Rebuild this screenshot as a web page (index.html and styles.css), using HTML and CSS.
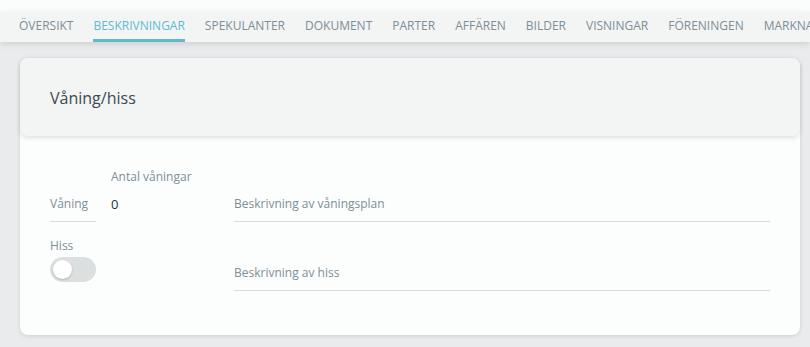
FILE: index.html
```html
<!DOCTYPE html>
<html lang="sv">
<head>
<meta charset="utf-8">
<title>Beskrivningar</title>
<link rel="stylesheet" href="styles.css">
</head>
<body>
<div class="topstrip"></div>
<nav class="tabs">
  <a class="tab">ÖVERSIKT</a>
  <a class="tab active">BESKRIVNINGAR</a>
  <a class="tab">SPEKULANTER</a>
  <a class="tab">DOKUMENT</a>
  <a class="tab">PARTER</a>
  <a class="tab">AFFÄREN</a>
  <a class="tab">BILDER</a>
  <a class="tab">VISNINGAR</a>
  <a class="tab">FÖRENINGEN</a>
  <a class="tab">MARKNADSFÖRING</a>
</nav>
<main class="page">
  <section class="card">
    <header class="card-head">Våning/hiss</header>
    <div class="card-body">
      <div class="row">
        <div class="field f-small">
          <div class="label"></div>
          <div class="input placeholder underline">Våning</div>
        </div>
        <div class="field f-mid">
          <div class="label">Antal våningar</div>
          <div class="input value">0</div>
        </div>
        <div class="field f-wide">
          <div class="label"></div>
          <div class="input placeholder underline">Beskrivning av våningsplan</div>
        </div>
      </div>
      <div class="row">
        <div class="field f-small">
          <div class="label">Hiss</div>
          <div class="toggle"><span class="knob"></span></div>
        </div>
        <div class="field f-mid"></div>
        <div class="field f-wide">
          <div class="label"></div>
          <div class="input placeholder underline">Beskrivning av hiss</div>
        </div>
      </div>
    </div>
  </section>
</main>
</body>
</html>
```
FILE: styles.css
```css
* { box-sizing: border-box; }
html, body {
  margin: 0;
  padding: 0;
}
body {
  background: #e9ebec;
  font-family: "Open Sans", "Liberation Sans", sans-serif;
  font-size: 12px;
  color: #37474f;
  width: 810px;
  height: 347px;
  overflow: hidden;
}
.topstrip {
  height: 12px;
  background: #fbfcfc;
}
.tabs {
  display: flex;
  gap: 20px;
  padding-left: 19px;
  height: 30px;
  background: #f3f4f4;
  white-space: nowrap;
  overflow: hidden;
  box-shadow: 0 2px 6px rgba(0, 0, 0, 0.12);
  position: relative;
  z-index: 2;
}
.tab {
  display: block;
  flex: none;
  font-size: 12px;
  line-height: 16px;
  padding: 6px 0 5px;
  border-bottom: 3px solid transparent;
  color: #7d8f97;
}
.tab.active {
  color: #5cbbd3;
  border-bottom-color: #5cbbd3;
}
.page {
  padding: 16px 10px 0 20px;
}
.card {
  background: #fcfdfd;
  border-radius: 8px;
  box-shadow: 0 1px 4px rgba(0, 0, 0, 0.12);
}
.card-head {
  height: 78px;
  background: #f3f4f4;
  border-radius: 8px;
  box-shadow: 0 2px 5px rgba(0, 0, 0, 0.12);
  padding-left: 30px;
  display: flex;
  align-items: center;
  font-size: 16px;
  color: #3c4a52;
  position: relative;
}
.card-head { padding-top: 2px; }
.card-body {
  padding: 33px 30px 44px 30px;
  display: flex;
  flex-direction: column;
  gap: 16px;
}
.row {
  display: grid;
  grid-template-columns: 46px 108px 1fr;
  column-gap: 15px;
}
.label {
  height: 16px;
  line-height: 16px;
  margin-bottom: 3px;
  color: #7d8f97;
  font-size: 12px;
}
.input {
  line-height: 16px;
  padding: 8px 0 9px;
  border-bottom: 1px solid transparent;
  font-size: 12px;
}
.input.underline {
  border-bottom-color: #dadddf;
}
.placeholder {
  color: #7d8f97;
}
.value {
  color: #263238;
  font-size: 13px;
}
.toggle {
  width: 46px;
  height: 25px;
  border-radius: 13px;
  background: #dcdfe0;
  display: flex;
  align-items: center;
  padding-left: 3px;
}
.knob {
  width: 19px;
  height: 19px;
  border-radius: 50%;
  background: #ffffff;
  box-shadow: 0 1px 2px rgba(0, 0, 0, 0.2);
}
```
